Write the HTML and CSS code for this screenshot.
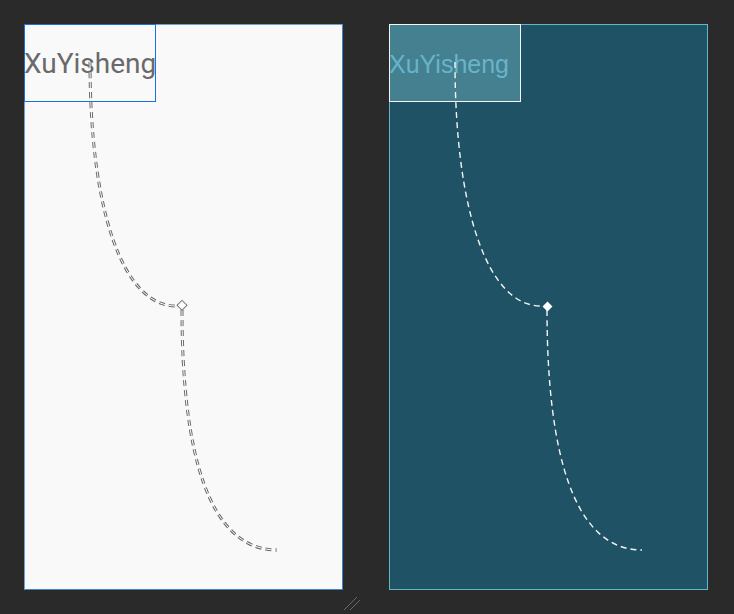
FILE: index.html
```html
<!DOCTYPE html>
<html>
<head>
<meta charset="utf-8">
<link rel="stylesheet" href="styles.css">
</head>
<body>
<div class="stage">
  <div class="panel panel-light">
    <div class="label label-light"><span>XuYisheng</span></div>
    <svg class="curves" viewBox="0 0 318 565" width="318" height="565">
      <path class="dash-under" d="M66,38 C66,190 100,282 152,282"/>
      <path class="dash-over" d="M66,38 C66,190 100,282 152,282"/>
      <path class="dash-under" d="M158,286 C158,430 185,526 253,526"/>
      <path class="dash-over" d="M158,286 C158,430 185,526 253,526"/>
      <rect class="knob-light" x="154" y="278" width="7" height="7" transform="rotate(45 158 282)"/>
    </svg>
  </div>
  <div class="panel panel-dark">
    <div class="label label-dark"><span>XuYisheng</span></div>
    <svg class="curves" viewBox="0 0 319 565" width="319" height="565">
      <path class="dash-white" d="M66,38 C66,190 100,282 152,282"/>
      <path class="dash-white" d="M158,286 C158,430 185,526 253,526"/>
      <rect class="knob-dark" x="155" y="279" width="7" height="7" transform="rotate(45 158.5 282.5)"/>
    </svg>
  </div>
</div>
<svg class="grip" width="18" height="18" viewBox="0 0 18 18">
  <line x1="1" y1="17" x2="14" y2="4"/>
  <line x1="7" y1="17" x2="17" y2="7"/>
</svg>
</body>
</html>
```
FILE: styles.css
```css
html, body {
  margin: 0;
  padding: 0;
  background: #2a2a2b;
  width: 734px;
  height: 614px;
  overflow: hidden;
  font-family: Roboto, "Liberation Sans", sans-serif;
}

.stage {
  display: flex;
  gap: 46px;
  padding: 24px 0 0 24px;
}

.panel {
  position: relative;
  height: 566px;
  box-sizing: border-box;
}

.panel-light {
  width: 319px;
  background: #f9f9f9;
  border: 1px solid #6f9fd6;
  border-right-color: #3f82d2;
  border-bottom-color: #3f82d2;
}

.panel-dark {
  width: 319px;
  background: #1f5265;
  border: 1px solid #62b6cc;
}

.label {
  position: relative;
  margin: -1px 0 0 -1px;
  width: 132px;
  height: 78px;
  box-sizing: border-box;
  display: flex;
  align-items: flex-start;
  font-size: 28px;
  line-height: 33px;
  white-space: nowrap;
  z-index: 1;
}

.label span {
  display: block;
  padding-top: 22px;
}

.label-light {
  border: 1px solid #1b6fe0;
  color: #6a6a6a;
}

.label-light span {
  margin-left: -1px;
}

.label-dark {
  border: 1px solid #f2f6f7;
  background: #44808f;
  color: #68b4cb;
}

.label-dark span {
  margin-left: -1px;
  padding-top: 23px;
  font-family: "Liberation Sans", Arial, sans-serif;
  font-size: 25px;
}

.curves {
  position: absolute;
  left: -1px;
  top: -1px;
  z-index: 2;
  overflow: visible;
}

.dash-under {
  fill: none;
  stroke: #6a6a6a;
  stroke-width: 3;
  stroke-dasharray: 6 4;
}

.dash-over {
  fill: none;
  stroke: #ffffff;
  stroke-width: 1;
  stroke-dasharray: 6 4;
}

.dash-white {
  fill: none;
  stroke: #f4f4f4;
  stroke-width: 1.4;
  stroke-dasharray: 6 4;
}

.knob-light {
  fill: #ffffff;
  stroke: #777777;
  stroke-width: 1;
}

.knob-dark {
  fill: #ffffff;
  stroke: none;
}

.grip {
  position: absolute;
  left: 343px;
  top: 593px;
}

.grip line {
  stroke: #6a6a6a;
  stroke-width: 1;
}
```
